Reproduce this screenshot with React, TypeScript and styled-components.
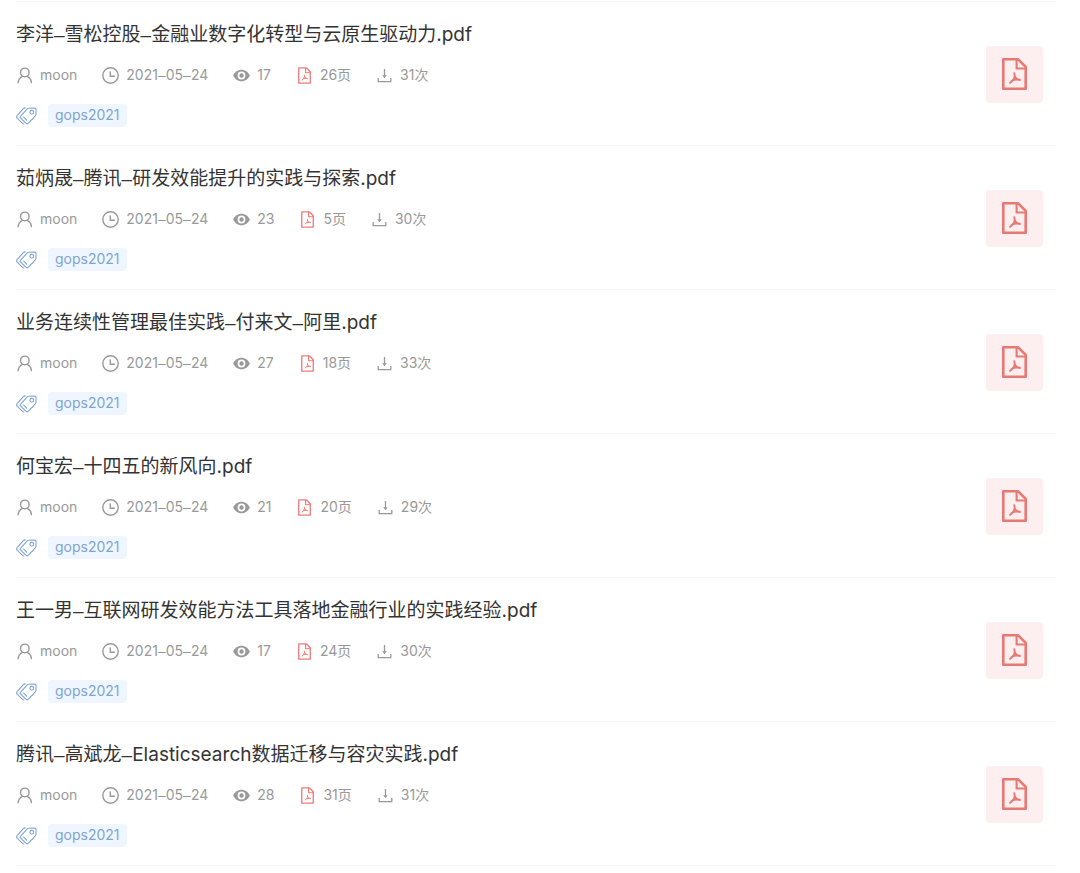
import React, { Fragment } from "react";
import styled, { createGlobalStyle } from "styled-components";

const GlobalStyle = createGlobalStyle`
  * { box-sizing: border-box; }
  body {
    margin: 0;
    background: #fff;
    color: #333;
    font-family: Inter, "Liberation Sans", "Noto Sans CJK SC", sans-serif;
  }
`;

const Page = styled.main`
  padding: 1px 24px 0 16px;
`;

const List = styled.ul`
  margin: 0;
  padding: 0;
  list-style: none;
  border-top: 1px solid #f4f4f4;
`;

const Row = styled.li`
  display: flex;
  align-items: center;
  justify-content: space-between;
  gap: 24px;
  padding: 19px 13px 18px 0;
  border-bottom: 1px solid #f4f4f4;
`;

const Info = styled.div`
  min-width: 0;
`;

const Title = styled.h2`
  margin: 0 0 15px;
  font-size: 19px;
  line-height: 28px;
  font-weight: 400;
`;

const TitleLink = styled.a`
  color: #333;
  text-decoration: none;
`;

const Dash = styled.span`
  font-family: "Liberation Sans", sans-serif;
`;

const Meta = styled.div`
  display: flex;
  align-items: center;
  gap: 25px;
  margin-bottom: 18px;
  height: 22px;
`;

const MetaItem = styled.div`
  display: flex;
  align-items: center;
  gap: 7px;
  color: #999;
  font-size: 14px;
  line-height: 22px;
  white-space: nowrap;
`;

const Tags = styled.div`
  display: flex;
  align-items: center;
  gap: 11px;
`;

const Tag = styled.a`
  padding: 0 7px;
  border-radius: 4px;
  background: #eff6ff;
  color: #7fa5d3;
  font-size: 14px;
  line-height: 21px;
  height: 23px;
  text-decoration: none;
`;

const Thumb = styled.a`
  display: flex;
  flex: none;
  align-items: center;
  justify-content: center;
  width: 57px;
  height: 57px;
  border-radius: 4px;
  background: #fdefef;
`;

const Icon = styled.svg`
  display: block;
  flex: none;
  fill: none;
`;

const UserIcon = () => (
  <Icon width="17" height="17" viewBox="0 0 17 17" stroke="#999" strokeWidth="1.4" strokeLinecap="round" aria-hidden="true">
    <circle cx="8.8" cy="5.4" r="4.3" />
    <path d="M2.2 15.6c.2-3.2 1.9-5.3 4.3-6.3M15.4 15.6c-.2-3.2-1.9-5.3-4.3-6.3" />
  </Icon>
);

const ClockIcon = () => (
  <Icon width="17" height="17" viewBox="0 0 17 17" stroke="#999" strokeWidth="1.4" aria-hidden="true">
    <circle cx="8.5" cy="8.5" r="7.7" />
    <path d="M8.3 4.5v4.8h4.5" />
  </Icon>
);

const EyeIcon = () => (
  <Icon width="17" height="17" viewBox="0 0 17 17" aria-hidden="true">
    <path
      fill="#999"
      fillRule="evenodd"
      d="M8.5 2.7C4.8 2.7 1.6 5.1.2 8.500c1.400 3.400 4.600 5.800 8.300 5.800s6.900-2.400 8.300-5.800C15.400 5.100 12.200 2.700 8.500 2.700zm0 9.700a3.900 3.900 0 1 1 0-7.800 3.900 3.900 0 0 1 0 7.800zm0-1.700a2.200 2.200 0 1 0 0-4.400 2.200 2.200 0 0 0 0 4.400z"
    />
  </Icon>
);

const PdfIcon = ({ large = false }: { large?: boolean }) => (
  <Icon
    width={large ? 25 : 17}
    height={large ? 32 : 17}
    viewBox={large ? "0 0 25 32" : "-4 0 33 32"}
    stroke={large ? "#e87874" : "#ee7c7a"}
    strokeLinejoin="round"
    strokeLinecap="round"
    aria-hidden="true"
  >
    <path d="M1.3 1.3h14.900L23.700 8.800v21.900H1.300z" strokeWidth="2.600" />
    <path d="M14.600 1.300v9.200h9.100" strokeWidth="2.100" />
    <path
      d="M12.300 15.200c.9 2.700.2 4.700-1.100 6.500-.9 1.300-1.800 2.100-3.100 3.100M12.500 17.600c.7 2.300 2.200 3.900 5.400 4.500M9.600 23c2.200-1.400 4.200-1.900 8.200-1.200"
      strokeWidth="1.900"
    />
  </Icon>
);

const DownloadIcon = () => (
  <Icon width="17" height="17" viewBox="0 0 17 17" stroke="#999" strokeWidth="1.3" aria-hidden="true">
    <path d="M2.200 11v3.700h12.600V11M8.500 2v8" />
    <path d="M6.200 8.200h4.600l-2.300 3z" fill="#999" stroke="none" />
  </Icon>
);

const TagIcon = () => (
  <Icon width="21" height="18" viewBox="0 0 21 18" stroke="#7fa5d3" strokeWidth="1.1" strokeLinejoin="round" strokeLinecap="round" aria-hidden="true">
    <path d="M12.700 1.300 18.500 1c1 0 1.600.6 1.600 1.600l-.3 5c0 .6-.3 1.100-.7 1.500l-6.900 7.300c-.6.6-1.500.6-2.100 0l-5.400-5.200c-.6-.6-.6-1.500 0-2.100l6.500-7.200c.4-.4.900-.6 1.500-.6z" />
    <path d="M9.200.9c-.8 0-1.400.2-1.900.7L.9 8.900c-.5.6-.5 1.300 0 1.900l5.600 5.600c.4.4.8.6 1.300.6" />
    <circle cx="15.800" cy="5.300" r="1.900" />
    <path d="m7.700 10.200 3 3" />
  </Icon>
);

// Sets the separators of a title or date in the wider dash.
const Dashed = ({ text }: { text: string }) => (
  <span>
    {text.split("–").map((part, index) => (
      <Fragment key={index}>
        {index > 0 && <Dash>–</Dash>}
        {part}
      </Fragment>
    ))}
  </span>
);

interface Doc {
  title: string;
  views: number;
  pages: number;
  downloads: number;
}

const docs: Doc[] = [
  { title: "李洋–雪松控股–金融业数字化转型与云原生驱动力.pdf", views: 17, pages: 26, downloads: 31 },
  { title: "茹炳晟–腾讯–研发效能提升的实践与探索.pdf", views: 23, pages: 5, downloads: 30 },
  { title: "业务连续性管理最佳实践–付来文–阿里.pdf", views: 27, pages: 18, downloads: 33 },
  { title: "何宝宏–十四五的新风向.pdf", views: 21, pages: 20, downloads: 29 },
  { title: "王一男–互联网研发效能方法工具落地金融行业的实践经验.pdf", views: 17, pages: 24, downloads: 30 },
  { title: "腾讯–高斌龙–Elasticsearch数据迁移与容灾实践.pdf", views: 28, pages: 31, downloads: 31 },
];

const DocRow = ({ doc }: { doc: Doc }) => (
  <Row>
    <Info>
      <Title>
        <TitleLink href="#"><Dashed text={doc.title} /></TitleLink>
      </Title>
      <Meta>
        <MetaItem><UserIcon />moon</MetaItem>
        <MetaItem><ClockIcon /><Dashed text="2021–05–24" /></MetaItem>
        <MetaItem><EyeIcon />{doc.views}</MetaItem>
        <MetaItem><PdfIcon />{`${doc.pages}页`}</MetaItem>
        <MetaItem><DownloadIcon />{`${doc.downloads}次`}</MetaItem>
      </Meta>
      <Tags>
        <TagIcon />
        <Tag href="#">gops2021</Tag>
      </Tags>
    </Info>
    <Thumb href="#" aria-label={doc.title}>
      <PdfIcon large />
    </Thumb>
  </Row>
);

export default function App() {
  return (
    <>
      <GlobalStyle />
      <Page>
        <List>
          {docs.map((doc) => (
            <DocRow key={doc.title} doc={doc} />
          ))}
        </List>
      </Page>
    </>
  );
}
